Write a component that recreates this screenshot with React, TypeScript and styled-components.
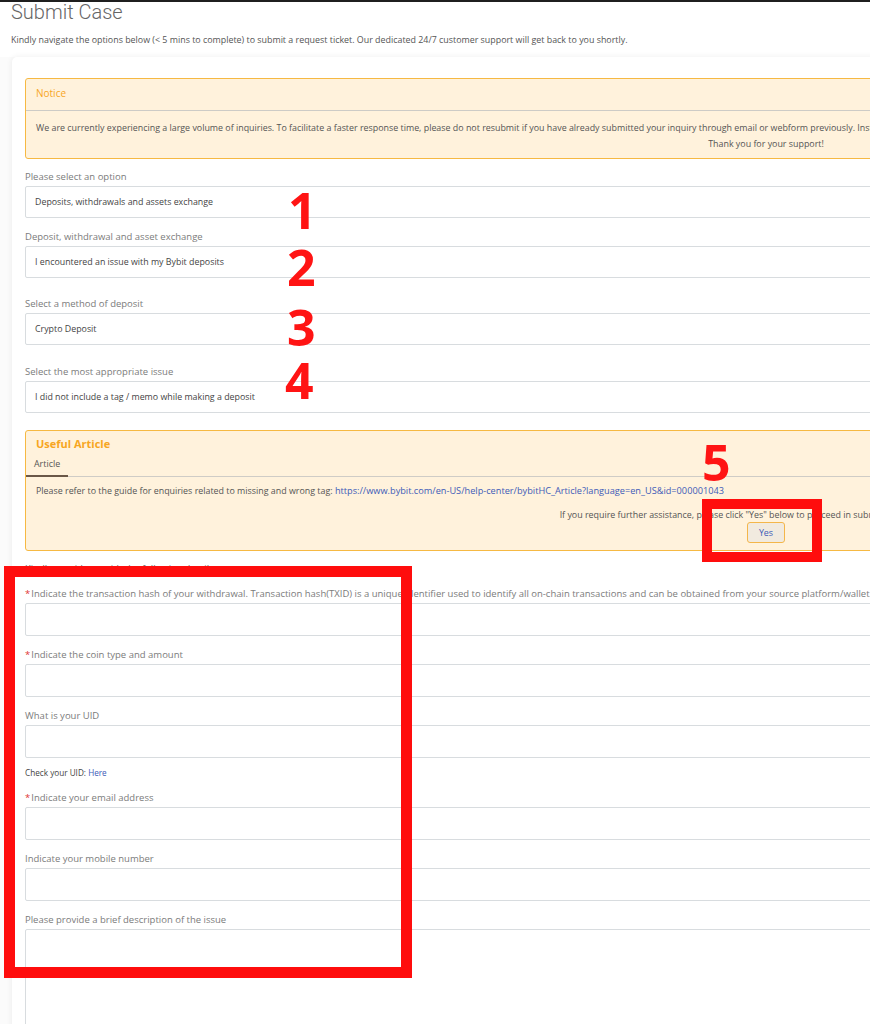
import React from "react";
import styled, { createGlobalStyle } from "styled-components";

const GlobalStyle = createGlobalStyle`
  html, body {
    margin: 0;
    padding: 0;
    background: #fbfbfb;
    overflow: hidden;
  }
  body {
    font-family: "Open Sans", "Noto Sans", Arial, sans-serif;
    color: #555;
  }
  * { box-sizing: border-box; }
`;

const Page = styled.div`
  position: relative;
  width: 1532px;
  min-height: 1024px;
`;

const TopRule = styled.div`
  height: 2px;
  background: #1f1f1f;
`;

const Header = styled.header`
  background: #fff;
  padding: 0 11px 11px;
`;

const Title = styled.h1`
  margin: 0;
  font-family: Roboto, "Open Sans", sans-serif;
  font-size: 20px;
  line-height: 20px;
  font-weight: 300;
  color: #666;
`;

const Intro = styled.p`
  margin: 12px 0 0;
  font-size: 8.9px;
  line-height: 12px;
  color: #555;
`;

const Card = styled.section`
  margin: 0 12px;
  background: #fff;
  border-radius: 5px;
  box-shadow: 0 0 6px rgba(0, 0, 0, 0.07);
  padding: 21px 13px 40px;
`;

const Callout = styled.div`
  border: 1px solid #f6b943;
  background: #fff2dc;
  border-radius: 3px;
`;

const NoticeHead = styled.div`
  height: 32px;
  display: flex;
  align-items: center;
  padding: 0 10px 3px;
  font-size: 10px;
  color: #f7a61f;
  border-bottom: 1px solid #cdcbc6;
`;

const NoticeBody = styled.div`
  padding: 9px 10px 6px;
  font-size: 8.9px;
  line-height: 16px;
  color: #555;
`;

const LeftLine = styled.div`
  white-space: nowrap;
`;

const CenterLine = styled.div`
  text-align: center;
`;

const Field = styled.div<{ $gap: number }>`
  margin-top: ${(p) => p.$gap}px;
`;

const Label = styled.div`
  font-size: 9.5px;
  line-height: 12px;
  color: #7b7b7b;
  margin-bottom: 3px;
  white-space: nowrap;
`;

const Star = styled.span`
  color: #e03434;
  margin-right: 1px;
`;

const SelectBox = styled.div`
  height: 32px;
  border: 1px solid #d8dcdf;
  border-radius: 2px;
  background: #fff;
  display: flex;
  align-items: center;
  padding: 0 9px;
  font-size: 8.85px;
  color: #444;
`;

const Input = styled.div<{ $tall?: boolean }>`
  height: ${(p) => (p.$tall ? 140 : 33)}px;
  border: 1px solid #d8dcdf;
  border-radius: 2px;
  background: #fff;
`;

const ArticleHead = styled.div`
  padding: 5px 10px 0;
  font-size: 11px;
  line-height: 16px;
  font-weight: 700;
  color: #f7a61f;
`;

const TabList = styled.div`
  display: flex;
  border-bottom: 1px solid #cfccc6;
`;

const Tab = styled.div`
  padding: 6px 8px 5px;
  font-size: 8.9px;
  line-height: 12px;
  color: #555;
  border-bottom: 2px solid #6a5747;
  margin-bottom: -1px;
`;

const ArticleBody = styled.div`
  padding: 8px 10px 7px;
  font-size: 8.9px;
  line-height: 12px;
  color: #555;
`;

const Link = styled.a`
  color: #3d5bb8;
  text-decoration: none;
`;

const ArticleLink = styled(Link)`
  font-size: 9.2px;
`;

const Assist = styled.div`
  margin-top: 12px;
  text-align: center;
  white-space: nowrap;
`;

const YesButton = styled.button`
  display: block;
  margin: 1px auto 0;
  width: 38px;
  height: 21px;
  border: 1px solid #f4b64a;
  border-radius: 3px;
  background: #f1eadf;
  color: #3d5bb8;
  font-family: inherit;
  font-size: 8.9px;
  padding: 0;
`;

const SectionNote = styled.div`
  margin-top: 12px;
  font-size: 9.5px;
  line-height: 12px;
  color: #666;
`;

const Hint = styled.div`
  margin-top: 9px;
  font-size: 8.2px;
  line-height: 12px;
  color: #444;
`;

/* Annotation layer drawn over the form */
const Marker = styled.div`
  position: absolute;
  border: 11px solid #ff0d0d;
`;

const Num = styled.span`
  position: absolute;
  font-family: "Open Sans", "Liberation Sans", sans-serif;
  font-weight: 700;
  font-size: 50px;
  line-height: 1;
  color: #ff1414;
`;

const selects = [
  { label: "Please select an option", value: "Deposits, withdrawals and assets exchange", gap: 12 },
  { label: "Deposit, withdrawal and asset exchange", value: "I encountered an issue with my Bybit deposits", gap: 13 },
  { label: "Select a method of deposit", value: "Crypto Deposit", gap: 20 },
  { label: "Select the most appropriate issue", value: "I did not include a tag / memo while making a deposit", gap: 21 },
];

const numbers = [
  { n: "1", left: 288, top: 185 },
  { n: "2", left: 287, top: 242 },
  { n: "3", left: 287, top: 302 },
  { n: "4", left: 285, top: 355 },
  { n: "5", left: 702, top: 437 },
];

export default function App() {
  return (
    <Page>
      <GlobalStyle />
      <TopRule />
      <Header>
        <Title>Submit Case</Title>
        <Intro>
          Kindly navigate the options below (&lt; 5 mins to complete) to submit a request ticket. Our dedicated 24/7
          customer support will get back to you shortly.
        </Intro>
      </Header>

      <Card>
        <Callout>
          <NoticeHead>Notice</NoticeHead>
          <NoticeBody>
            <LeftLine>
              We are currently experiencing a large volume of inquiries. To facilitate a faster response time, please do
              not resubmit if you have already submitted your inquiry through email or webform previously. Instead, please
              wait for our reply and we will get back to you as soon as possible.
            </LeftLine>
            <CenterLine>Thank you for your support!</CenterLine>
          </NoticeBody>
        </Callout>

        {selects.map((s) => (
          <Field key={s.label} $gap={s.gap}>
            <Label>{s.label}</Label>
            <SelectBox>{s.value}</SelectBox>
          </Field>
        ))}

        <Field $gap={17}>
          <Callout>
            <ArticleHead>Useful Article</ArticleHead>
            <TabList>
              <Tab>Article</Tab>
            </TabList>
            <ArticleBody>
              Please refer to the guide for enquiries related to missing and wrong tag:{" "}
              <ArticleLink href="#">
                https://www.bybit.com/en-US/help-center/bybitHC_Article?language=en_US&amp;id=000001043
              </ArticleLink>
              <Assist>
                If you require further assistance, please click "Yes" below to proceed in submitting a new case ticket.
              </Assist>
              <YesButton>Yes</YesButton>
            </ArticleBody>
          </Callout>
        </Field>

        <SectionNote>Kindly provide us with the following details</SectionNote>

        <Field $gap={13}>
          <Label>
            <Star>*</Star>Indicate the transaction hash of your withdrawal. Transaction hash(TXID) is a unique identifier
            used to identify all on-chain transactions and can be obtained from your source platform/wallet.
          </Label>
          <Input />
        </Field>
        <Field $gap={13}>
          <Label>
            <Star>*</Star>Indicate the coin type and amount
          </Label>
          <Input />
        </Field>
        <Field $gap={13}>
          <Label>What is your UID</Label>
          <Input />
        </Field>
        <Hint>
          Check your UID: <Link href="#">Here</Link>
        </Hint>
        <Field $gap={13}>
          <Label>
            <Star>*</Star>Indicate your email address
          </Label>
          <Input />
        </Field>
        <Field $gap={13}>
          <Label>Indicate your mobile number</Label>
          <Input />
        </Field>
        <Field $gap={13}>
          <Label>Please provide a brief description of the issue</Label>
          <Input $tall />
        </Field>
      </Card>

      <Marker style={{ left: 4, top: 566, width: 408, height: 412 }} />
      <Marker style={{ left: 702, top: 499, width: 120, height: 63, borderWidth: 10 }} />
      {numbers.map((d) => (
        <Num key={d.n} style={{ left: d.left, top: d.top }}>
          {d.n}
        </Num>
      ))}
    </Page>
  );
}
